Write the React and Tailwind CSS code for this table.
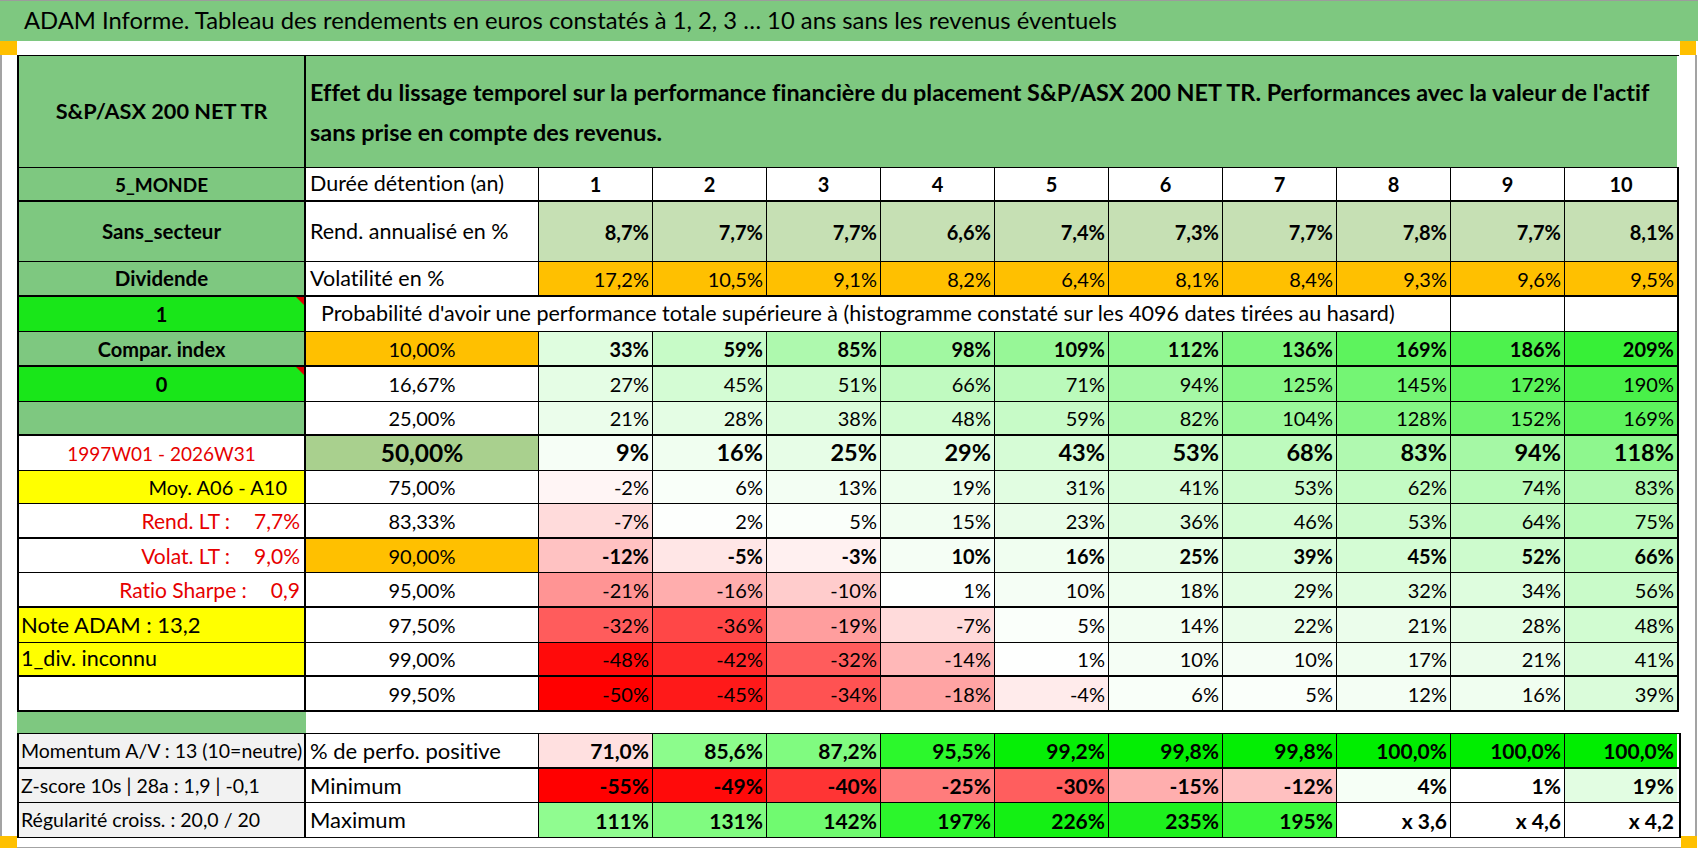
import React from "react";

// colonnes : libellé gauche, libellé durée, puis 10 durées
const GRID = "grid grid-cols-[287px_233px_repeat(9,114px)_112px]";

const rend = ["8,7%", "7,7%", "7,7%", "6,6%", "7,4%", "7,3%", "7,7%", "7,8%", "7,7%", "8,1%"];
const vol = ["17,2%", "10,5%", "9,1%", "8,2%", "6,4%", "8,1%", "8,4%", "9,3%", "9,6%", "9,5%"];

// couleur du tableau de probabilités (rouge -> blanc -> vert)
function heat(v) {
  if (v < 0) {
    const t = Math.min(-v / 50, 1);
    const c = Math.round(255 * (1 - t));
    return `rgb(255,${c},${c})`;
  }
  const t = Math.min(v / 209, 1);
  const a = Math.round(255 - 200 * t);
  return `rgb(${a},${Math.round(255 - 15 * t)},${a})`;
}

const rows = [
  { pct: "10,00%", pctCls: "bg-[#ffc000]", bold: true, h: "h-[35px]", b: "border-b-2", left: "compar", v: [33, 59, 85, 98, 109, 112, 136, 169, 186, 209] },
  { pct: "16,67%", h: "h-[35px]", b: "border-b", left: "zero", v: [27, 45, 51, 66, 71, 94, 125, 145, 172, 190] },
  { pct: "25,00%", h: "h-[34px]", b: "border-b-2", left: "empty", v: [21, 28, 38, 48, 59, 82, 104, 128, 152, 169] },
  { pct: "50,00%", pctCls: "bg-[#a9d08e] font-bold text-[24.5px]", big: true, h: "h-[35px]", b: "border-b", left: "dates", v: [9, 16, 25, 29, 43, 53, 68, 83, 94, 118] },
  { pct: "75,00%", h: "h-[33px]", b: "border-b", left: "moy", v: [-2, 6, 13, 19, 31, 41, 53, 62, 74, 83] },
  { pct: "83,33%", h: "h-[35px]", b: "border-b-2", left: "rendlt", v: [-7, 2, 5, 15, 23, 36, 46, 53, 64, 75] },
  { pct: "90,00%", pctCls: "bg-[#ffc000]", bold: true, h: "h-[34px]", b: "border-b", left: "volat", v: [-12, -5, -3, 10, 16, 25, 39, 45, 52, 66] },
  { pct: "95,00%", h: "h-[35px]", b: "border-b-2", left: "sharpe", v: [-21, -16, -10, 1, 10, 18, 29, 32, 34, 56] },
  { pct: "97,50%", h: "h-[35px]", b: "border-b", left: "note", v: [-32, -36, -19, -7, 5, 14, 22, 21, 28, 48] },
  { pct: "99,00%", h: "h-[34px]", b: "border-b-2", left: "div", v: [-48, -42, -32, -14, 1, 10, 10, 17, 21, 41] },
  { pct: "99,50%", h: "h-[35px]", b: "border-b-2", left: "blank", v: [-50, -45, -34, -18, -4, 6, 5, 12, 16, 39] },
];

const bottom = [
  {
    left: "Momentum A/V : 13 (10=neutre)",
    label: "% de perfo. positive",
    h: "h-[35px]",
    b: "border-b-2",
    cells: [
      ["71,0%", "#ffe0e0"], ["85,6%", "#8cfc8c"], ["87,2%", "#80fb80"], ["95,5%", "#2cf82c"], ["99,2%", "#06ef06"],
      ["99,8%", "#04ee04"], ["99,8%", "#04ee04"], ["100,0%", "#00ee00"], ["100,0%", "#00ee00"], ["100,0%", "#00ee00"],
    ],
  },
  {
    left: "Z-score 10s | 28a : 1,9 | -0,1",
    label: "Minimum",
    h: "h-[34px]",
    b: "border-b",
    cells: [
      ["-55%", "#ff0000"], ["-49%", "#ff0a0a"], ["-40%", "#ff3434"], ["-25%", "#ff7c7c"], ["-30%", "#ff5e5e"],
      ["-15%", "#ffaeae"], ["-12%", "#ffc0c0"], ["4%", "#f6fff6"], ["1%", "#ffffff"], ["19%", "#e2fde2"],
    ],
  },
  {
    left: "Régularité croiss. : 20,0 / 20",
    label: "Maximum",
    h: "h-[35px]",
    b: "border-b",
    cells: [
      ["111%", "#90fc90"], ["131%", "#80fb80"], ["142%", "#70fa70"], ["197%", "#2cf62c"], ["226%", "#14f014"],
      ["235%", "#1ef01e"], ["195%", "#3cf83c"], ["x 3,6", "#ffffff"], ["x 4,6", "#ffffff"], ["x 4,2", "#ffffff"],
    ],
  },
];

function Tri() {
  return (
    <span className="absolute top-0 right-0 w-0 h-0 border-l-[8px] border-l-transparent border-t-[8px] border-t-[#e00000]" />
  );
}

function LeftCell({ kind }) {
  const base = "relative flex items-center border-r-2 border-black";
  switch (kind) {
    case "compar":
      return <div className={`${base} justify-center bg-[#7ec880] font-bold text-[20px]`}>Compar. index</div>;
    case "zero":
      return (
        <div className={`${base} justify-center bg-[#19e619] font-bold text-[20px]`}>
          0
          <Tri />
        </div>
      );
    case "empty":
      return <div className={`${base} bg-[#7ec880]`} />;
    case "dates":
      return <div className={`${base} justify-center text-[#e60000] text-[19px]`}>1997W01 - 2026W31</div>;
    case "moy":
      return <div className={`${base} justify-end pr-[17px] bg-[#ffff00] text-[20px]`}>Moy. A06 - A10</div>;
    case "rendlt":
      return (
        <div className={`${base} justify-end gap-[24px] pr-[4px] text-[#e60000] text-[21px]`}>
          <span>Rend. LT :</span>
          <span>7,7%</span>
        </div>
      );
    case "volat":
      return (
        <div className={`${base} justify-end gap-[24px] pr-[4px] text-[#e60000] text-[21px]`}>
          <span>Volat. LT :</span>
          <span>9,0%</span>
        </div>
      );
    case "sharpe":
      return (
        <div className={`${base} justify-end gap-[24px] pr-[4px] text-[#e60000] text-[21px]`}>
          <span>Ratio Sharpe :</span>
          <span>0,9</span>
        </div>
      );
    case "note":
      return <div className={`${base} pl-[2px] bg-[#ffff00] text-[22px]`}>Note ADAM : 13,2</div>;
    case "div":
      return <div className={`${base} pl-[2px] bg-[#ffff00] text-[21.5px]`}>1_div. inconnu</div>;
    default:
      return <div className={base} />;
  }
}

export default function App() {
  return (
    <div className="w-[1698px] h-[848px] bg-white overflow-hidden text-black font-['Lato',sans-serif] text-[20px] leading-none [font-variant-ligatures:none]">
      {/* titre */}
      <div className="h-[41px] bg-[#7ec880] border-t border-[#9c9c9c] flex items-center pl-[24px] text-[23.8px] whitespace-nowrap">
        ADAM Informe. Tableau des rendements en euros constatés à 1, 2, 3 … 10 ans sans les revenus éventuels
      </div>
      <div className="h-[14px] flex justify-between w-[1696px]">
        <div className="w-[17px] bg-[#ffc000]" />
        <div className="w-[16px] bg-[#ffc000]" />
      </div>

      <div className="relative w-[1697px] h-[793px] border-l-2 border-r-2 border-b border-[#a3a3a3] pl-[15px]">
        {/* bloc principal */}
        <div className="w-[1662px] border-t border-l-2 border-black">
          <div className={`${GRID} h-[112px] border-b border-black`}>
            <div className="flex items-center justify-center bg-[#7ec880] border-r-2 border-black font-bold text-[21.7px]">
              S&amp;P/ASX 200 NET TR
            </div>
            <div className="col-span-11 flex flex-col justify-center pl-[4px] bg-[#7ec880] font-bold text-[23.4px] leading-[40px] whitespace-nowrap">
              <span>Effet du lissage temporel sur la performance financière du placement S&amp;P/ASX 200 NET TR. Performances avec la valeur de l'actif</span>
              <span>sans prise en compte des revenus.</span>
            </div>
          </div>

          <div className="border-r-2 border-black">
            {/* durées */}
            <div className={`${GRID} h-[34px] border-b-2 border-black`}>
              <div className="flex items-center justify-center bg-[#7ec880] border-r-2 border-black font-bold text-[19px]">5_MONDE</div>
              <div className="flex items-center pl-[4px] border-r border-black text-[21.5px]">Durée détention (an)</div>
              {rend.map((_, i) => (
                <div key={i} className={`flex items-center justify-center font-bold ${i < 9 ? "border-r border-black" : ""}`}>
                  {i + 1}
                </div>
              ))}
            </div>

            {/* rendement */}
            <div className={`${GRID} h-[60px] border-b border-black`}>
              <div className="flex items-center justify-center bg-[#7ec880] border-r-2 border-black font-bold text-[20.5px]">Sans_secteur</div>
              <div className="flex items-center pl-[4px] border-r border-black text-[21.5px]">Rend. annualisé en %</div>
              {rend.map((r, i) => (
                <div key={i} className={`flex items-center justify-end pr-[3px] font-bold bg-[#c6e0b4] ${i < 9 ? "border-r border-black" : ""}`}>
                  {r}
                </div>
              ))}
            </div>

            {/* volatilité */}
            <div className={`${GRID} h-[35px] border-b-2 border-black`}>
              <div className="flex items-center justify-center bg-[#7ec880] border-r-2 border-black font-bold text-[20.5px]">Dividende</div>
              <div className="flex items-center pl-[4px] border-r border-black text-[21.5px]">Volatilité en %</div>
              {vol.map((r, i) => (
                <div key={i} className={`flex items-center justify-end pr-[3px] bg-[#ffc000] ${i < 9 ? "border-r border-black" : ""}`}>
                  {r}
                </div>
              ))}
            </div>

            {/* probabilité */}
            <div className={`${GRID} h-[35px] border-b border-black`}>
              <div className="relative flex items-center justify-center bg-[#19e619] border-r-2 border-black font-bold text-[20px]">
                1
                <Tri />
              </div>
              <div className="col-span-9 flex items-center pl-[15px] border-r border-black whitespace-nowrap text-[21.5px]">
                Probabilité d'avoir une performance totale supérieure à (histogramme constaté sur les 4096 dates tirées au hasard)
              </div>
              <div className="border-r border-black" />
              <div />
            </div>

            {rows.map((row) => (
              <div key={row.pct} className={`${GRID} ${row.h} ${row.b} border-black`}>
                <LeftCell kind={row.left} />
                <div className={`flex items-center justify-center border-r border-black text-[20px] ${row.pctCls || ""}`}>{row.pct}</div>
                {row.v.map((v, i) => (
                  <div
                    key={i}
                    className={`flex items-center justify-end pr-[3px] text-[20px] ${row.bold ? "font-bold" : ""} ${row.big ? "font-bold text-[23.5px]" : ""} ${i < 9 ? "border-r border-black" : ""}`}
                    style={{ backgroundColor: heat(v) }}
                  >
                    {v}%
                  </div>
                ))}
              </div>
            ))}
          </div>
        </div>

        {/* séparateur */}
        <div className="h-[21px] w-[289px] bg-[#7ec880]" />

        {/* bloc bas */}
        <div className="w-[1664px] border-t border-l-2 border-r-2 border-black">
          {bottom.map((row) => (
            <div key={row.label} className={`${GRID} ${row.h} ${row.b} border-black`}>
              <div className="flex items-center pl-[2px] bg-[#f2f2f2] border-r-2 border-black text-[19.5px] whitespace-nowrap overflow-hidden">
                {row.left}
              </div>
              <div className="flex items-center pl-[4px] border-r border-black text-[22px]">{row.label}</div>
              {row.cells.map(([t, c], i) => (
                <div
                  key={i}
                  className={`flex items-center justify-end pr-[3px] font-bold text-[21px] ${i < 9 ? "border-r border-black" : ""}`}
                  style={{ backgroundColor: c }}
                >
                  {t}
                </div>
              ))}
            </div>
          ))}
        </div>

        <div className="absolute left-[-2px] bottom-[-1px] w-[17px] h-[12px] bg-[#ffc000]" />
        <div className="absolute right-[-2px] bottom-[-1px] w-[16px] h-[12px] bg-[#ffc000]" />
      </div>
    </div>
  );
}
